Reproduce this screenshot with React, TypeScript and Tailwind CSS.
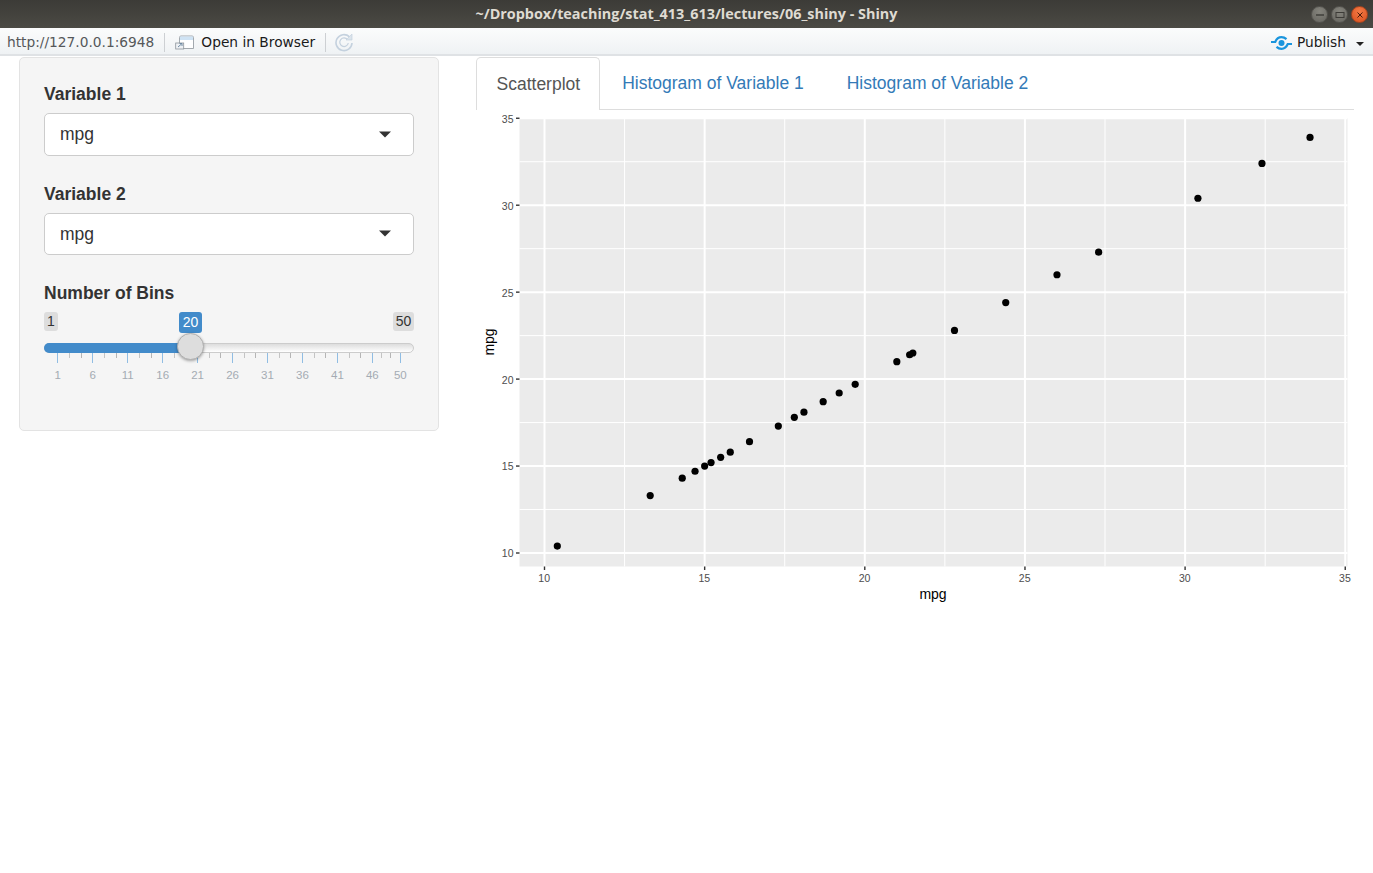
import { useState } from "react";

const MPG = [
  10.4, 13.3, 14.3, 14.7, 15, 15.2, 15.5, 15.8, 16.4, 17.3, 17.8, 18.1, 18.7,
  19.2, 19.7, 21, 21.4, 21.5, 22.8, 24.4, 26, 27.3, 30.4, 32.4, 33.9,
];
const MAJOR = [10, 15, 20, 25, 30, 35];
const MINOR = [12.5, 17.5, 22.5, 27.5, 32.5];

// plot svg starts at page (476, 110)
const plotX = (v: number) => 544.5 + (v - 10) * 32.03 - 476;
const plotY = (v: number) => 553 - (v - 10) * 17.39 - 110;

const SLIDER_LABELS = [1, 6, 11, 16, 21, 26, 31, 36, 41, 46, 50];
const tickX = (v: number) => 13.3 + (v - 1) * 6.99;

const minorTicks: number[] = [];
for (let i = 0; i < 10; i++) {
  const from = 1 + i * 5;
  const to = i === 9 ? 50 : from + 5;
  const step = (to - from) / 3;
  minorTicks.push(from + step, from + step * 2);
}

const Caret = () => (
  <svg width="12" height="7" viewBox="0 0 12 7" className="shrink-0">
    <path d="M0 0.5h12L6 6.5z" fill="#333333" />
  </svg>
);

const SelectBox = ({ label }: { label: string }) => (
  <div className="mb-[26px]">
    <div className="h-[25px] text-[17.5px] font-bold leading-[25px] text-[#333333]">{label}</div>
    <div className="mt-[6px] flex h-[42.5px] items-center justify-between rounded-[5px] border border-[#cccccc] bg-white pl-[15px] pr-[22px] text-[17.5px] text-[#333333]">
      <span>mpg</span>
      <Caret />
    </div>
  </div>
);

const Slider = () => (
  <div>
    <div className="h-[25px] text-[17.5px] font-bold leading-[25px] text-[#333333]">Number of Bins</div>
    <div className="relative mt-[5px] h-[78px] w-[370px]">
      <span className="absolute left-0 top-[0.5px] flex h-[19px] w-[14px] items-center justify-center rounded-[3px] bg-[#dddddd] text-[14px] text-[#333333]">1</span>
      <span className="absolute right-0 top-[0.5px] flex h-[19px] w-[21px] items-center justify-center rounded-[3px] bg-[#dddddd] text-[14px] text-[#333333]">50</span>
      <span className="absolute left-[135px] top-[0.5px] flex h-[21px] w-[23px] items-center justify-center rounded-[3px] bg-[#428bca] text-[14px] text-white">20</span>
      <div className="absolute left-0 top-[32px] h-[10px] w-full rounded-full border border-[#cccccc] bg-[linear-gradient(to_bottom,#dddddd,#ffffff)]" />
      <div className="absolute left-0 top-[32px] h-[10px] w-[147px] rounded-l-full bg-[#428bca]" />
      {minorTicks.map((v, i) => (
        <div
          key={v}
          className={i % 2 === 1 ? "absolute top-[42px] h-[5px] w-[1px] bg-[#b5b5b5]" : "absolute top-[42px] h-[5px] w-[1px] bg-[#c4c4c4]"}
          style={{ left: tickX(v) }}
        />
      ))}
      {SLIDER_LABELS.map((v) => (
        <div key={v}>
          <div className="absolute top-[42px] h-[10px] w-[1px] bg-[#90bde3]" style={{ left: tickX(v) }} />
          <span
            className="absolute top-[57px] w-[30px] -translate-x-1/2 text-center text-[11.5px] leading-[14px] text-[#a4abb3]"
            style={{ left: tickX(v) + 0.5 }}
          >
            {v}
          </span>
        </div>
      ))}
      <div className="absolute left-[133px] top-[22px] h-[27px] w-[27px] rounded-full border border-[#b0b0b0] bg-[#dddddd] shadow-[0_1px_3px_rgba(0,0,0,0.35)]" />
    </div>
  </div>
);

const Plot = () => (
  <svg width="878" height="500" viewBox="0 0 878 500" className="block" fontFamily="'Liberation Sans', sans-serif">
    <rect x="43.5" y="8" width="828" height="448.5" fill="#ebebeb" />
    {MINOR.map((v) => (
      <g key={v} stroke="#ffffff" strokeWidth="1">
        <line x1={plotX(v)} x2={plotX(v)} y1="8" y2="456.5" />
        <line x1="43.5" x2="871.5" y1={plotY(v)} y2={plotY(v)} />
      </g>
    ))}
    {MAJOR.map((v) => (
      <g key={v}>
        <line x1={plotX(v)} x2={plotX(v)} y1="8" y2="456.5" stroke="#ffffff" strokeWidth="2" />
        <line x1="43.5" x2="871.5" y1={plotY(v)} y2={plotY(v)} stroke="#ffffff" strokeWidth="2" />
        <line x1={plotX(v)} x2={plotX(v)} y1="456.5" y2="460" stroke="#333333" strokeWidth="1.4" />
        <line x1="40" x2="43.5" y1={plotY(v)} y2={plotY(v)} stroke="#333333" strokeWidth="1.4" />
        <text x={plotX(v) - 0.3} y="471.5" textAnchor="middle" fontSize="10.5" fill="#4d4d4d">{v}</text>
        <text x="37.5" y={plotY(v) + 4.4} textAnchor="end" fontSize="10.5" fill="#4d4d4d">{v}</text>
      </g>
    ))}
    {MPG.map((v) => (
      <circle key={v} cx={plotX(v)} cy={plotY(v)} r="3.6" fill="#000000" />
    ))}
    <text x="457" y="489" textAnchor="middle" fontSize="14" fill="#000000">mpg</text>
    <text transform="translate(17.5 232) rotate(-90)" textAnchor="middle" fontSize="14" fill="#000000">mpg</text>
  </svg>
);

const WindowButton = ({ kind }: { kind: "min" | "max" | "close" }) => (
  <div
    className={
      kind === "close"
        ? "flex h-[17px] w-[17px] items-center justify-center rounded-full border border-[#a8451f] bg-[radial-gradient(circle_at_50%_30%,#f47a45,#d9501e)]"
        : "flex h-[17px] w-[17px] items-center justify-center rounded-full border border-[#55544f] bg-[radial-gradient(circle_at_50%_30%,#85847d,#66655f)]"
    }
  >
    <svg width="10" height="10" viewBox="0 0 10 10" fill="none" stroke={kind === "close" ? "#4a1a08" : "#3c3b37"} strokeWidth="1">
      {kind === "min" && <path d="M1 5h8" strokeWidth="1.4" />}
      {kind === "max" && <rect x="1" y="2.5" width="8" height="5" />}
      {kind === "close" && <path d="M2.5 2.5l5 5M7.5 2.5l-5 5" />}
    </svg>
  </div>
);

const Divider = () => <div className="h-[19px] w-[1px] bg-[#cdd0d3]" />;

const BrowserIcon = () => (
  <svg width="19" height="15" viewBox="0 0 19 15" className="shrink-0">
    <path d="M4.5 2.5a1.5 1.5 0 0 1 1.5-1.5h11a1.5 1.5 0 0 1 1.5 1.5v11h-14z" fill="#ffffff" stroke="#8d949b" strokeWidth="0.8" />
    <path d="M5 1.5h13v3.5H5z" fill="#cfe3f4" />
    <rect x="0.7" y="8" width="8" height="6" fill="#eef1f4" stroke="#8d949b" strokeWidth="0.8" />
    <path d="M3 12l3.5-3M4.5 8.5h2.5v2.5" fill="none" stroke="#6f8aa3" strokeWidth="1" />
  </svg>
);

const RefreshIcon = () => (
  <svg width="20" height="20" viewBox="0 0 20 20" fill="none" className="shrink-0">
    <path d="M15.5 4.8A8 8 0 1 0 18 11" stroke="#c4d1de" strokeWidth="1.6" />
    <path d="M13.5 7.6A4.3 4.3 0 1 0 14.3 11" stroke="#c4d1de" strokeWidth="1.2" />
    <path d="M18 2v6h-6z" fill="#dbe4ec" stroke="#c4d1de" strokeWidth="0.7" />
  </svg>
);

const PublishIcon = () => (
  <svg width="21" height="14" viewBox="0 0 21 14" fill="none" className="shrink-0">
    <path d="M0 6h4.2C5.5 3 7.6 1.2 10.5 1.2c1.8 0 3.4 0.6 5 2" stroke="#1a95dd" strokeWidth="2.2" />
    <path d="M21 8h-4.2c-1.3 3-3.4 4.8-6.3 4.8-1.8 0-3.4-0.6-5-2" stroke="#1a95dd" strokeWidth="2.2" />
    <circle cx="10.5" cy="7" r="3" fill="#1a95dd" />
  </svg>
);

const TitleBar = () => (
  <div className="flex h-[28px] items-center justify-center bg-[linear-gradient(to_bottom,#3c3b37,#4b4a44)] font-['Open_Sans',sans-serif] text-[14.4px] font-bold text-[#dfdbd2]">
    <span>~/Dropbox/teaching/stat_413_613/lectures/06_shiny - Shiny</span>
    <div className="absolute right-[5px] top-[6px] flex gap-[3px]">
      <WindowButton kind="min" />
      <WindowButton kind="max" />
      <WindowButton kind="close" />
    </div>
  </div>
);

const Toolbar = () => (
  <div className="flex h-[28px] items-center border-b-2 border-[#dfe2e5] bg-[linear-gradient(to_bottom,#fbfcfc,#eff2f4)] pl-[7px] pr-[9px] pt-[3px] font-['DejaVu_Sans',sans-serif] text-[13.75px]">
    <span className="text-[#55585a]">http://127.0.0.1:6948</span>
    <div className="ml-[10px]"><Divider /></div>
    <div className="ml-[10px]"><BrowserIcon /></div>
    <span className="ml-[7px] text-[#1a1a1a]">Open in Browser</span>
    <div className="ml-[10px]"><Divider /></div>
    <div className="ml-[8px] -mt-[1px]"><RefreshIcon /></div>
    <div className="ml-auto flex items-center">
      <PublishIcon />
      <span className="ml-[5px] text-[#1a1a1a]">Publish</span>
      <svg width="8" height="4" viewBox="0 0 8 4" className="ml-[10px] mt-[2px]">
        <path d="M0 0h8L4 4z" fill="#222222" />
      </svg>
    </div>
  </div>
);

export default function App() {
  const [active] = useState("Scatterplot");
  const tabs = ["Scatterplot", "Histogram of Variable 1", "Histogram of Variable 2"];

  return (
    <div className="relative min-h-[873px] bg-white font-['Liberation_Sans',Arial,sans-serif]">
      <TitleBar />
      <Toolbar />
      <div className="flex items-start pl-[19px]">
        <div className="mt-[1px] h-[374px] w-[420px] rounded-[5px] border border-[#e3e3e3] bg-[#f5f5f5] pl-[24px] pr-[24px] pt-[24px]">
          <SelectBox label="Variable 1" />
          <SelectBox label="Variable 2" />
          <Slider />
        </div>
        <div className="ml-[37px] w-[878px]">
          <div className="flex h-[54px] items-end border-b border-[#dddddd] text-[17.5px]">
            {tabs.map((t) =>
              t === active ? (
                <div
                  key={t}
                  className="-mb-[1px] flex h-[53px] items-center rounded-t-[5px] border border-b-0 border-[#dddddd] bg-white pl-[19.5px] pr-[18.5px] text-[#555555]"
                >
                  {t}
                </div>
              ) : (
                <div key={t} className="ml-[2px] flex h-[52px] items-center border border-transparent px-[19.5px] text-[#337ab7]">
                  {t}
                </div>
              ),
            )}
          </div>
          <Plot />
        </div>
      </div>
    </div>
  );
}
